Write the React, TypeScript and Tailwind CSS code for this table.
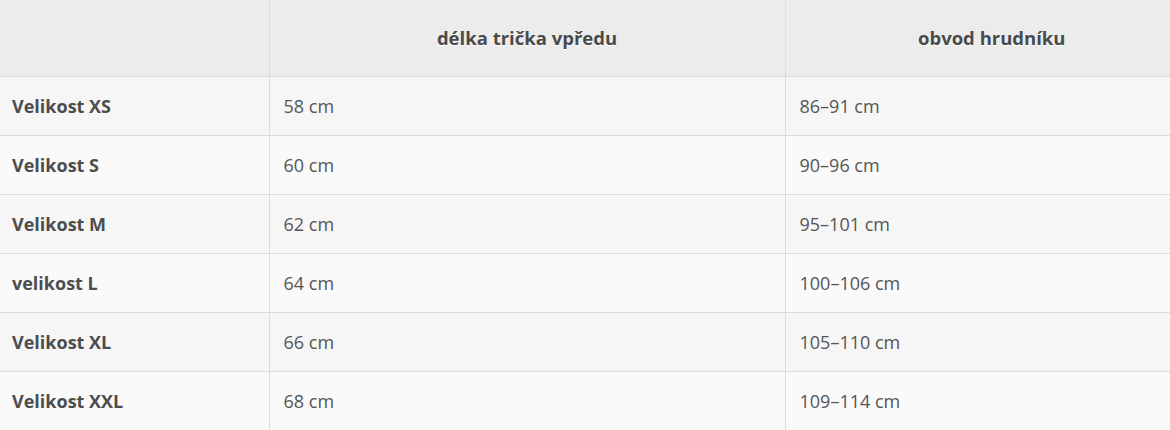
const ROWS = [
  { label: 'Velikost XS', length: '58 cm', chest: '86–91 cm' },
  { label: 'Velikost S', length: '60 cm', chest: '90–96 cm' },
  { label: 'Velikost M', length: '62 cm', chest: '95–101 cm' },
  { label: 'velikost L', length: '64 cm', chest: '100–106 cm' },
  { label: 'Velikost XL', length: '66 cm', chest: '105–110 cm' },
  { label: 'Velikost XXL', length: '68 cm', chest: '109–114 cm' },
];

export default function App() {
  return (
    <div className="w-[1170px] h-[430px] overflow-hidden bg-white font-['Open_Sans',sans-serif] text-[#555]">
      <table className="w-[1198px] border-collapse table-fixed">
        <colgroup>
          <col className="w-[269px]" />
          <col className="w-[516px]" />
          <col />
        </colgroup>
        <thead>
          <tr className="h-[76px] bg-[#ececec] border-b border-[#dcdcdc]">
            <th className="border-r border-[#dcdcdc]" />
            <th className="border-r border-[#dcdcdc] text-[18.5px] font-bold text-center [text-shadow:0_1px_1px_#fff] text-[#4a4a4a]">
              délka trička vpředu
            </th>
            <th className="text-[18.5px] font-bold text-center [text-shadow:0_1px_1px_#fff] text-[#4a4a4a]">
              obvod hrudníku
            </th>
          </tr>
        </thead>
        <tbody>
          {ROWS.map((r, i) => (
            <tr
              key={r.label}
              className={`h-[59px] border-b border-[#dcdcdc] ${i % 2 === 0 ? 'bg-[#f6f6f6]' : 'bg-[#fafafa]'}`}
            >
              <td className="border-r border-[#dcdcdc] pl-[12px] pt-[2px] text-[18px] font-bold text-[#4d4d4d]">{r.label}</td>
              <td className="border-r border-[#dcdcdc] pl-[14px] pt-[2px] text-[18px]">{r.length}</td>
              <td className="pl-[14px] pt-[2px] text-[18px]">{r.chest}</td>
            </tr>
          ))}
        </tbody>
      </table>
    </div>
  );
}
